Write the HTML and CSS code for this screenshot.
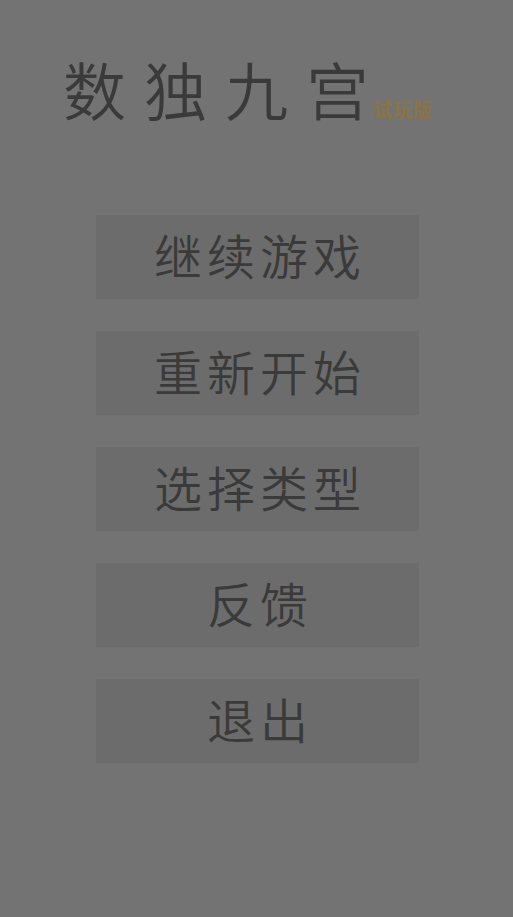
FILE: index.html
```html
<!DOCTYPE html>
<html lang="zh">
<head>
<meta charset="utf-8">
<link rel="stylesheet" href="styles.css">
</head>
<body>
<div class="screen">
  <header class="title-row">
    <h1 class="title">数独九<span class="title-last">宫</span></h1>
    <span class="edition">试玩版</span>
  </header>
  <nav class="menu">
    <div class="btn">继续游戏</div>
    <div class="btn">重新开始</div>
    <div class="btn">选择类型</div>
    <div class="btn">反馈</div>
    <div class="btn">退出</div>
  </nav>
</div>
</body>
</html>
```
FILE: styles.css
```css
html, body {
  margin: 0;
  padding: 0;
  background: #737373;
}
.screen {
  width: 513px;
  height: 917px;
  font-family: "Noto Sans CJK SC", "Noto Sans", sans-serif;
  color: #3a3a3a;
}
.title-row {
  display: flex;
  align-items: flex-end;
  padding: 53px 0 0 63px;
  height: 70px;
}
.title {
  margin: 0;
  font-size: 63px;
  font-weight: 350;
  line-height: 70px;
  letter-spacing: 18px;
}
.title-last {
  letter-spacing: 0;
}
.edition {
  font-size: 19px;
  font-weight: 700;
  color: #8a7445;
  line-height: 20px;
  margin: 0 0 4px 4px;
  letter-spacing: 1px;
}
.menu {
  display: flex;
  flex-direction: column;
  gap: 32px;
  margin: 92px 0 0 96px;
  width: 323px;
}
.btn {
  height: 84px;
  background: #6c6c6c;
  display: flex;
  align-items: center;
  justify-content: center;
  font-size: 48px;
  font-weight: 350;
  line-height: 1;
  letter-spacing: 5px;
  padding-left: 5px;
  padding-bottom: 6px;
  box-sizing: border-box;
}
```
